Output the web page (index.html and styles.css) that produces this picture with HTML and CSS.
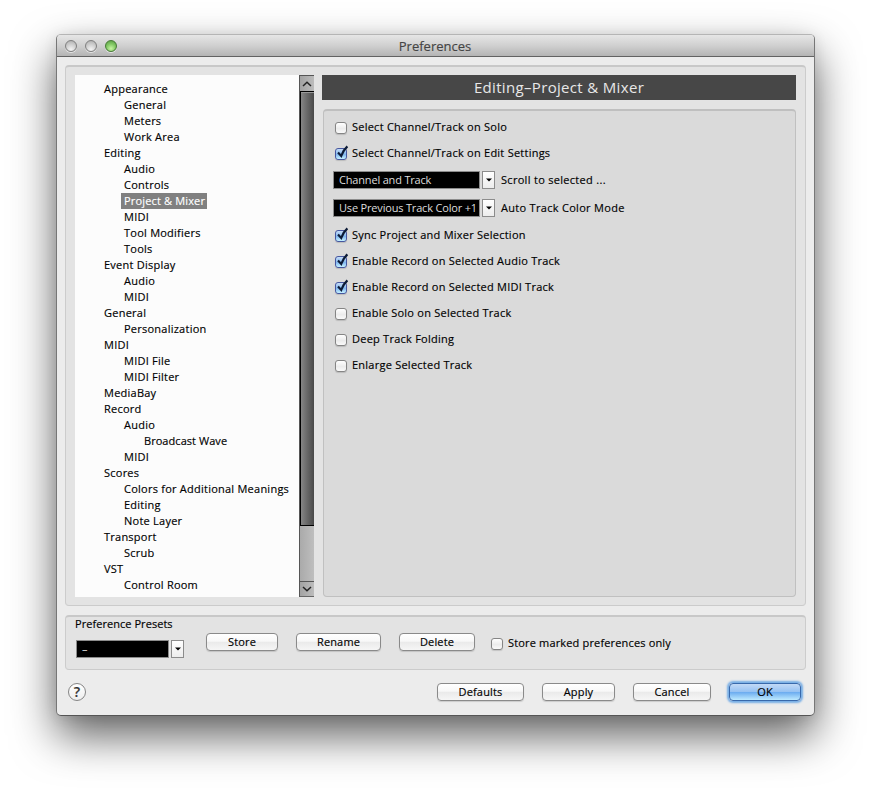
FILE: index.html
```html
<!DOCTYPE html>
<html lang="en">
<head>
<meta charset="utf-8">
<title>Preferences</title>
<link rel="stylesheet" href="styles.css">
</head>
<body>
<svg class="defs" width="0" height="0" aria-hidden="true">
  <symbol id="tick" viewBox="0 0 14 15"><path d="M3 7.6 L6.2 11 Q8 5.4 12.4 1.4" fill="none" stroke="#0b1a36" stroke-width="2.2"/></symbol>
  <symbol id="down" viewBox="0 0 6 4"><path d="M0 .4H6L3 3.6Z" fill="#000"/></symbol>
</svg>
<main class="window">
  <header class="titlebar">
    <div class="lights"><i></i><i></i><i class="zoom"></i></div>
    <h1>Preferences</h1>
  </header>
  <section class="group main">
    <div class="tree-wrap">
      <ul class="tree">
        <li>Appearance</li><li class="l2">General</li><li class="l2">Meters</li><li class="l2">Work Area</li>
        <li>Editing</li><li class="l2">Audio</li><li class="l2">Controls</li><li class="l2"><span class="selected">Project &amp; Mixer</span></li><li class="l2">MIDI</li><li class="l2">Tool Modifiers</li><li class="l2">Tools</li>
        <li>Event Display</li><li class="l2">Audio</li><li class="l2">MIDI</li>
        <li>General</li><li class="l2">Personalization</li>
        <li>MIDI</li><li class="l2">MIDI File</li><li class="l2">MIDI Filter</li>
        <li>MediaBay</li>
        <li>Record</li><li class="l2">Audio</li><li class="l3">Broadcast Wave</li><li class="l2">MIDI</li>
        <li>Scores</li><li class="l2">Colors for Additional Meanings</li><li class="l2">Editing</li><li class="l2">Note Layer</li>
        <li>Transport</li><li class="l2">Scrub</li>
        <li>VST</li><li class="l2">Control Room</li>
      </ul>
      <div class="scrollbar">
        <div class="arrow"><svg width="10" height="6" viewBox="0 0 10 6"><path d="M1 5 5 1.3 9 5" fill="none" stroke="#222" stroke-width="1.5"/></svg></div>
        <div class="thumb"></div>
        <div class="track"></div>
        <div class="arrow bottom"><svg width="10" height="6" viewBox="0 0 10 6"><path d="M1 1 5 4.7 9 1" fill="none" stroke="#222" stroke-width="1.5"/></svg></div>
      </div>
    </div>
    <div class="page">
      <h2>Editing–Project &amp; Mixer</h2>
      <div class="options">
        <div class="row"><span class="check"></span>Select Channel/Track on Solo</div>
        <div class="row"><span class="check on"><svg width="14" height="15"><use href="#tick"/></svg></span>Select Channel/Track on Edit Settings</div>
        <div class="row pick"><span class="select"><span class="value">Channel and Track</span><span class="drop"><svg width="6" height="4"><use href="#down"/></svg></span></span>Scroll to selected ...</div>
        <div class="row pick"><span class="select"><span class="value">Use Previous Track Color +1</span><span class="drop"><svg width="6" height="4"><use href="#down"/></svg></span></span>Auto Track Color Mode</div>
        <div class="row"><span class="check on"><svg width="14" height="15"><use href="#tick"/></svg></span>Sync Project and Mixer Selection</div>
        <div class="row"><span class="check on"><svg width="14" height="15"><use href="#tick"/></svg></span>Enable Record on Selected Audio Track</div>
        <div class="row"><span class="check on"><svg width="14" height="15"><use href="#tick"/></svg></span>Enable Record on Selected MIDI Track</div>
        <div class="row"><span class="check"></span>Enable Solo on Selected Track</div>
        <div class="row"><span class="check"></span>Deep Track Folding</div>
        <div class="row"><span class="check"></span>Enlarge Selected Track</div>
      </div>
    </div>
  </section>
  <section class="group presets">
    <div class="preset">
      <div class="caption">Preference Presets</div>
      <span class="select"><span class="value">–</span><span class="drop"><svg width="6" height="4"><use href="#down"/></svg></span></span>
    </div>
    <button class="btn store">Store</button>
    <button class="btn rename">Rename</button>
    <button class="btn delete">Delete</button>
    <div class="marked"><span class="check"></span>Store marked preferences only</div>
  </section>
  <footer>
    <button class="help">?</button>
    <button class="btn defaults">Defaults</button>
    <button class="btn apply">Apply</button>
    <button class="btn cancel">Cancel</button>
    <button class="btn ok">OK</button>
  </footer>
</main>
</body>
</html>
```
FILE: styles.css
```css
* { box-sizing: border-box; margin: 0; padding: 0; }
body {
  width: 871px; height: 794px; overflow: hidden; background: #fff;
  padding: 34px 0 0 56px; color: #000;
  font: 11px/16px "Lucida Grande", "Open Sans", "Noto Sans", sans-serif;
  letter-spacing: .24px; white-space: nowrap; -webkit-text-stroke: .15px;
}
.defs { position: absolute; }
svg { display: block; }
.window {
  width: 759px; height: 682px; background: #ececec;
  border: 1px solid #777; border-top-color: #b5b5b5; border-bottom-color: #555;
  border-radius: 5px; box-shadow: 0 20px 44px rgba(0,0,0,.62), 0 1px 14px rgba(0,0,0,.08);
}
.titlebar {
  height: 22px; display: grid; grid-template-columns: 60px 1fr 61px; align-items: center;
  background: linear-gradient(#e6e6e6, #d0d0d0 50%, #b4b4b4);
  border-bottom: 1px solid #626262; border-radius: 4px 4px 0 0;
}
.titlebar h1 { font-size: 13px; font-weight: 400; text-align: center; color: #444; letter-spacing: 0; padding-top: 1px; }
.lights { display: flex; gap: 8px; padding: 1px 0 0 8px; }
.lights i {
  width: 12px; height: 12px; border-radius: 50%; border: 1px solid #808080;
  background: radial-gradient(circle at 50% 85%, #f4f4f4, #c9c9c9 60%, #aaa);
  box-shadow: 0 1px 0 #e4e4e4;
}
.lights .zoom { border-color: #467a35; background: radial-gradient(circle at 50% 75%, #c8f5a4, #83c965 50%, #54963f); }
.group {
  margin-left: 8px; width: 741px; background: #e3e3e3;
  border: 1px solid #ccc; border-top: 2px solid #c8c8c8; border-bottom-color: #cbcbcb; border-radius: 4px;
}
.main { margin-top: 8px; height: 541px; padding: 8px 9px 8px 9px; display: flex; gap: 8px; }
.tree-wrap { display: flex; width: 239px; height: 522px; }
.tree { list-style: none; width: 224px; padding: 6px 0 0 29px; background: #fcfcfc; overflow: hidden; }
.tree li { height: 16px; }
.tree .l2 { padding-left: 20px; }
.tree .l3 { padding-left: 40px; letter-spacing: .05px; }
.selected { display: inline-block; height: 16px; margin-left: -3px; padding: 0 2px 0 3px; background: #808080; color: #fff; letter-spacing: .16px; }
.scrollbar { width: 15px; display: flex; flex-direction: column; border-left: 1px solid #555; }
.arrow { height: 16px; display: grid; place-items: center; background: linear-gradient(90deg, #a2a2a2, #bcbcbc); border-top: 1px solid #555; }
.arrow.bottom { border-bottom: 1px solid #666; }
.thumb { height: 435px; border: 1px solid #000; border-width: 1px 0 1px 1px; background: linear-gradient(90deg, #858585, #484848); box-shadow: inset 0 1px #999; }
.track { flex: 1; background: linear-gradient(90deg, #aaa, #bebebe); }
.page { width: 474px; }
.page h2 { height: 25px; background: #474747; color: #e8e8e8; font-size: 15px; line-height: 25px; font-weight: 400; text-align: center; letter-spacing: .33px; -webkit-text-stroke: 0; }
.options {
  margin: 9px 0 0 1px; height: 488px; padding: 3px 0 0 9px; background: #dadada;
  border: 1px solid #c0c0c0; border-top: 2px solid #bfbfbf; border-radius: 4px;
}
.row { height: 26px; display: flex; align-items: center; }
.row.pick { height: 28px; letter-spacing: .3px; }
.row > .check, .marked > .check { margin: 2px 5px 0 2px; }
.check {
  width: 12px; height: 12px; flex: none; border: 1px solid #858585; border-radius: 3px;
  background: linear-gradient(#fff, #ececec 55%, #fafafa); box-shadow: 0 1px 1px rgba(0,0,0,.14);
}
.check.on { border-color: #4657a0; background: linear-gradient(#c5dcf7, #82b8f0 55%, #c6f2ff); }
.check svg { margin: -4px 0 0 -1px; }
.select { display: flex; gap: 2px; margin-right: 6px; }
.value { width: 147px; height: 18px; border: 1px solid #8c8c8c; background: #000; color: #ddd; padding-left: 5px; line-height: 16px; letter-spacing: -.18px; -webkit-text-stroke: 0; }
.drop { width: 13px; height: 18px; display: grid; place-items: center; border: 1px solid #8c8c8c; background: linear-gradient(#fff, #ededed); }
.presets { margin-top: 9px; height: 55px; display: flex; }
.preset { width: 140px; padding-left: 9px; }
.caption { height: 23px; line-height: 14px; letter-spacing: .05px; }
.preset .select { margin-left: 1px; }
.preset .value { width: 93px; }
.btn {
  height: 18px; flex: none; border: 1px solid #8a8a8a; border-radius: 4px; color: #000;
  background: linear-gradient(#fff, #f8f8f8 45%, #eaeaea 52%, #f6f6f6);
  box-shadow: 0 1px 1px rgba(0,0,0,.14); font: inherit; line-height: 16px; letter-spacing: .15px; -webkit-text-stroke: .15px;
}
.presets .btn { margin-top: 16px; }
.store { width: 72px; margin-right: 18px; }
.rename { width: 85px; margin-right: 18px; }
.delete { width: 76px; margin-right: 14px; }
.marked { display: flex; align-items: center; height: 16px; margin-top: 18px; letter-spacing: .16px; }
footer { display: flex; margin-top: 13px; padding-left: 11px; align-items: center; }
.help {
  width: 18px; height: 18px; margin: -1px 351px 0 0; border: 1px solid #858585; border-radius: 50%;
  background: linear-gradient(#fff, #eee); font: 600 14px/16px "Open Sans", sans-serif; color: #333;
}
.defaults { width: 87px; margin-right: 18px; }
.apply { width: 73px; margin-right: 18px; }
.cancel { width: 78px; margin-right: 18px; }
.ok {
  width: 72px; border-color: #3869ab;
  background: linear-gradient(#c2d9f6, #96c2f3 48%, #6cacf0 52%, #bdeaff);
  box-shadow: 0 0 2px 2px #77aee6;
}
```
